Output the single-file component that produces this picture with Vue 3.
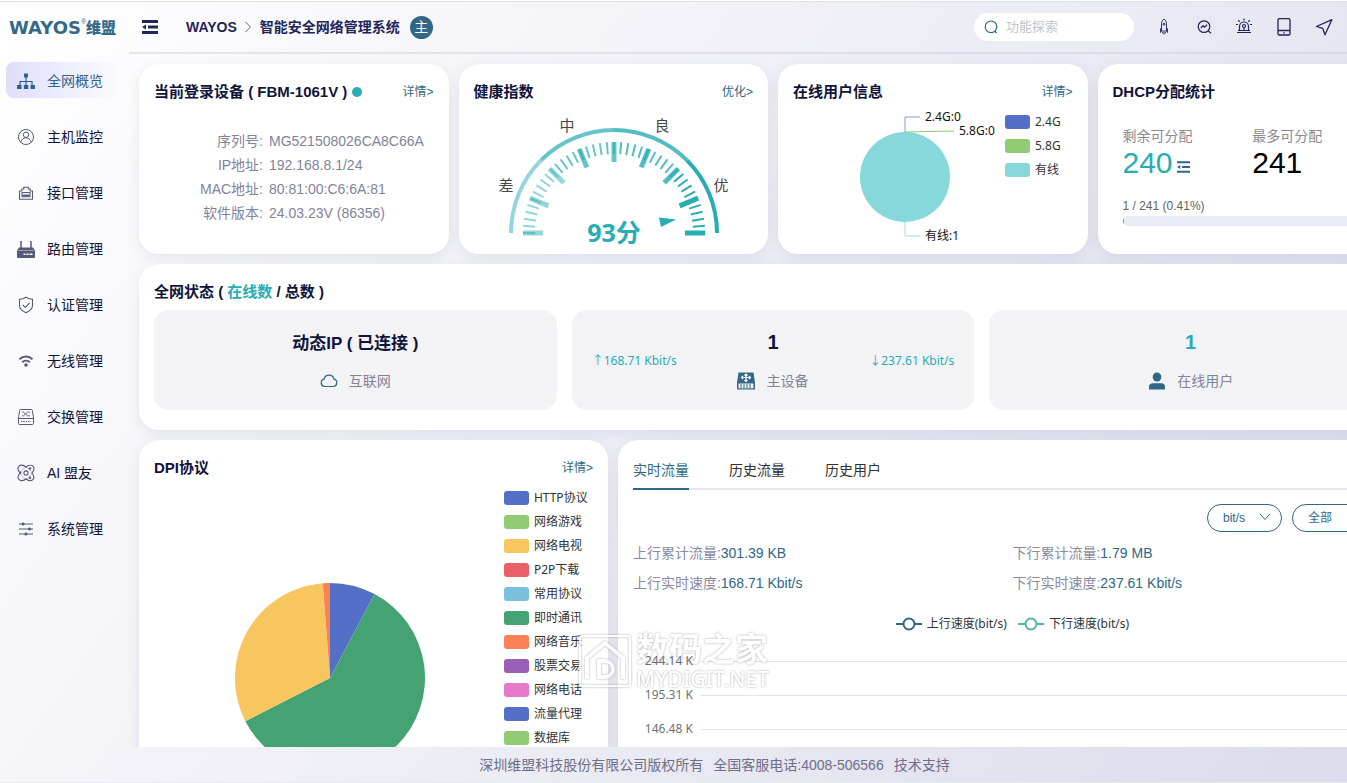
<script setup>
import { ref } from 'vue'

const menu = [
  { icon: 'tree', label: '全网概览' },
  { icon: 'host', label: '主机监控' },
  { icon: 'port', label: '接口管理' },
  { icon: 'router', label: '路由管理' },
  { icon: 'shield', label: '认证管理' },
  { icon: 'wifi', label: '无线管理' },
  { icon: 'switch', label: '交换管理' },
  { icon: 'ai', label: 'AI 盟友' },
  { icon: 'sliders', label: '系统管理' },
]
const activeMenu = ref('tree')

const device = [
  ['序列号:', 'MG521508026CA8C66A'],
  ['IP地址:', '192.168.8.1/24'],
  ['MAC地址:', '80:81:00:C6:6A:81'],
  ['软件版本:', '24.03.23V (86356)'],
]

const polar = (cx, cy, r, deg) => {
  const a = (deg * Math.PI) / 180
  return [cx + r * Math.cos(a), cy + r * Math.sin(a)]
}

const GX = 126
const GY = 129
const bandOpacity = [0.5, 0.7, 0.8, 1]
const bands = bandOpacity.map((opacity, i) => {
  const [x1, y1] = polar(GX, GY, 103, 180 + i * 45)
  const [x2, y2] = polar(GX, GY, 103, 225 + i * 45)
  return { d: `M${x1} ${y1}A103 103 0 0 1 ${x2} ${y2}`, opacity }
})
const tick = (i, len) => {
  const deg = 180 + i * 4.5
  const [x1, y1] = polar(GX, GY, 91, deg)
  const [x2, y2] = polar(GX, GY, 91 - len, deg)
  const band = Math.max(0, Math.ceil(i / 10) - 1)
  return { x1, y1, x2, y2, opacity: bandOpacity[band] }
}
const minorTicks = Array.from({ length: 41 }, (_, i) => tick(i, 12))
const majorTicks = Array.from({ length: 9 }, (_, i) => tick(i * 5, 20))

const userLegend = [
  { label: '2.4G', color: '#5470c6' },
  { label: '5.8G', color: '#91cc75' },
  { label: '有线', color: '#86d8da' },
]

const slice = (from, to, color) => {
  const [x1, y1] = polar(176, 198, 95, from - 90)
  const [x2, y2] = polar(176, 198, 95, to - 90)
  const large = to - from > 180 ? 1 : 0
  return { color, d: `M176 198L${x1} ${y1}A95 95 0 ${large} 1 ${x2} ${y2}Z` }
}
const dpiSlices = [
  slice(0, 28, '#5470c6'),
  slice(28, 243, '#45a373'),
  slice(243, 355.6, '#f8c65f'),
  slice(355.6, 360, '#fa8155'),
]
const dpiLegend = [
  { label: 'HTTP协议', color: '#5470c6' },
  { label: '网络游戏', color: '#91cc75' },
  { label: '网络电视', color: '#f8c65f' },
  { label: 'P2P下载', color: '#ea6068' },
  { label: '常用协议', color: '#78c0de' },
  { label: '即时通讯', color: '#45a373' },
  { label: '网络音乐', color: '#fa8155' },
  { label: '股票交易', color: '#985fb5' },
  { label: '网络电话', color: '#e779cb' },
  { label: '流量代理', color: '#5470c6' },
  { label: '数据库', color: '#91cc75' },
]

const tabs = ['实时流量', '历史流量', '历史用户']
const activeTab = ref(0)
const stats = [
  ['上行累计流量:', '301.39 KB'],
  ['下行累计流量:', '1.79 MB'],
  ['上行实时速度:', '168.71 Kbit/s'],
  ['下行实时速度:', '237.61 Kbit/s'],
]
const axis = ['244.14 K', '195.31 K', '146.48 K']
</script>

<template>
  <div class="app">
    <aside class="side">
      <div class="logo">
        <span class="logo-en">WAYOS</span><sup>®</sup><span class="logo-cn">维盟</span>
      </div>
      <nav>
        <a v-for="m in menu" :key="m.icon" href="#" class="item" :class="{ on: activeMenu === m.icon }" @click.prevent="activeMenu = m.icon">
          <svg viewBox="0 0 20 20" width="20" height="20" fill="none" stroke="currentColor" stroke-width="1.2">
            <g v-if="m.icon === 'tree'">
              <path d="M10 6v9M4 15v-4.5h12V15" />
              <path d="M8 2.500h4v4H8zM1 14h4.500v4H1zM7.800 14h4.500v4H7.800zM14.500 14H19v4h-4.500z" fill="currentColor" stroke="none" />
            </g>
            <g v-else-if="m.icon === 'host'" stroke-width="1">
              <circle cx="10" cy="10" r="7.500" /><circle cx="10" cy="7.800" r="2.700" />
              <path d="M4.800 15.300c.8-3 2.700-4.500 5.200-4.500s4.400 1.500 5.200 4.500" />
            </g>
            <g v-else-if="m.icon === 'port'" stroke-width="1.100">
              <path d="M3.500 16.300V8h2.300V6h2V4.200h4.400V6h2v2h2.300v8.300z" /><path d="M6 9.500h8v4.300H6z" />
              <path d="M6.500 12.500h7" stroke-width="2" />
            </g>
            <g v-else-if="m.icon === 'router'">
              <path d="M5 2v7M15 2v7" stroke-width="1.500" />
              <path d="M3 8.500h14l2 3V18a1 1 0 0 1-1 1H2a1 1 0 0 1-1-1v-6.500z" fill="currentColor" stroke="none" />
              <path d="M2 11.500h16" stroke="#b9b9c8" stroke-width=".7" />
              <path d="M7.500 15.200h2M10.500 15.200h2M13.500 15.200h3" stroke="#fff" stroke-width="1.600" />
            </g>
            <g v-else-if="m.icon === 'shield'" stroke-width="1.100">
              <path d="M10 2.200c2 1.400 4.300 2 6.500 2v6.300c0 3.500-3 5.700-6.500 7.200-3.500-1.500-6.500-3.700-6.500-7.200V4.200c2.200 0 4.500-.6 6.500-2z" />
              <path d="M6.700 9.800l2.600 2.600 4.300-4.600" />
            </g>
            <g v-else-if="m.icon === 'wifi'" stroke-width="2">
              <path d="M3.500 8.200c3.700-3.600 9.300-3.600 13 0" /><path d="M6.200 11.200c2.200-2.100 5.400-2.100 7.600 0" />
              <circle cx="10" cy="14" r="1.800" fill="currentColor" stroke="none" />
            </g>
            <g v-else-if="m.icon === 'switch'" stroke-width="1">
              <path d="M4.800 2.500h10.400c.7 0 1.100.4 1.200 1l1.100 7.500v5.500c0 .6-.4 1-1 1h-13c-.6 0-1-.4-1-1V11l1.100-7.500c.1-.6.500-1 1.200-1zM2.500 11.500h15" />
              <path d="M6 5.200h1.500l4 3.600h2.500M6 8.800h1.500l4-3.600h2.500" stroke-width=".9" />
              <path d="M5 14.500h10" stroke-dasharray="1.400 1" />
            </g>
            <g v-else-if="m.icon === 'ai'" stroke-width="1.100">
              <path d="M10 4C7.500 2 4.500 1.800 3 3.200S2 7.500 4 10c-2 2.500-2.300 5.300-1 6.700s4.500 1.300 7-.7c2.500 2 5.700 2.100 7 .7s1-4.200-1-6.700c2-2.500 2.400-5.400 1-6.800S12.500 2 10 4z" />
              <path d="M4 10c1-2 3.500-5 6-6M10 4c2.500 1 5 4 6 6M16 10c-1 2-3.500 5-6 6M4 10c1 2.500 3.500 5 6 6" stroke-width=".4" />
              <circle cx="10" cy="10" r="2.100" />
              <circle cx="4.300" cy="9.800" r="1.200" fill="currentColor" stroke="none" /><circle cx="14" cy="5.500" r="1.200" fill="currentColor" stroke="none" /><circle cx="14" cy="14.800" r="1.200" fill="currentColor" stroke="none" />
            </g>
            <g v-else>
              <path d="M3 5h14M3 10h14M3 15h14" />
              <path d="M6 4h2v2H6zM12.500 9h2v2h-2zM9 14h2v2H9z" fill="currentColor" stroke-width=".8" />
            </g>
          </svg>
          <span>{{ m.label }}</span>
        </a>
      </nav>
    </aside>

    <header class="top">
      <button class="icon-btn fold" aria-label="折叠菜单">
        <svg viewBox="0 0 16 14" width="16" height="14"><path d="M0 0h16v3H0zM6 5.500h10v3H6zM0 11h16v3H0zM0 7l4-2.500v5z" fill="currentColor" /></svg>
      </button>
      <strong class="brand">WAYOS</strong>
      <svg class="sep" viewBox="0 0 8 12" width="8" height="12" fill="none" stroke="#5e6480"><path d="M1.500 1l5 5-5 5" /></svg>
      <strong class="sys">智能安全网络管理系统</strong>
      <span class="role">主</span>

      <label class="search">
        <svg viewBox="0 0 14 14" width="14" height="14" fill="none" stroke="#2f6784" stroke-width="1.200"><circle cx="7" cy="6.800" r="5.800" /><path d="M10.500 11l2 2" /></svg>
        <input type="text" placeholder="功能探索" aria-label="功能探索" />
      </label>
      <div class="tools">
        <button class="icon-btn" aria-label="加速">
          <svg viewBox="0 0 20 20" width="20" height="20" fill="none" stroke="currentColor"><path d="M7.500 14V6.500C7.500 4.500 8.700 3 10 2c1.300 1 2.500 2.500 2.500 4.500V14zM7.500 10.500L6.500 12v3.500L7.500 14M12.500 10.500l1 1.500v3.500L12.500 14M8.700 15v1.500M11.300 15v1.500M10 15v2.500" stroke-width=".9" /><circle cx="10" cy="7.200" r="1" /></svg>
        </button>
        <button class="icon-btn" aria-label="诊断">
          <svg viewBox="0 0 20 20" width="20" height="20" fill="none" stroke="currentColor" stroke-width="1.200"><circle cx="10" cy="9.600" r="5.800" /><path d="M14.200 13.800l2.800 2.500M6.800 11l2.200-2.300 1.600 1.500 2.500-2.400" /></svg>
        </button>
        <button class="icon-btn" aria-label="告警">
          <svg viewBox="0 0 20 20" width="20" height="20" fill="none" stroke="currentColor" stroke-width="1.200"><path d="M3 15.500h14M5.500 13.500V9.500a4.500 4.500 0 0 1 9 0v4M4 13.500h12M10 1.500v2M4.300 3.200l1.400 1.600M15.700 3.200l-1.400 1.600M2 7.500h2M16 7.500h2M10 10.500v3" /><circle cx="10" cy="9" r="1.500" /></svg>
        </button>
        <button class="icon-btn" aria-label="移动端">
          <svg viewBox="0 0 20 20" width="20" height="20" fill="none" stroke="currentColor" stroke-width="1.300"><rect x="4" y="1.700" width="12" height="16.300" rx="1.200" /><path d="M4 13.500h12M9.300 15.800h1.400" /></svg>
        </button>
        <button class="icon-btn" aria-label="发送">
          <svg viewBox="0 0 20 20" width="20" height="20" fill="none" stroke="currentColor" stroke-width="1.300" stroke-linejoin="round"><path d="M17.800 2.700L2.500 9.500l6.200 1.800 2.300 6.500z" /></svg>
        </button>
      </div>
    </header>

    <main class="main">
      <section class="row four">
        <article class="card">
          <div class="head">
            <h2>当前登录设备 ( FBM-1061V ) <i class="dot"></i></h2>
            <a href="#">详情&gt;</a>
          </div>
          <dl class="device">
            <template v-for="d in device" :key="d[0]">
              <dt>{{ d[0] }}</dt>
              <dd>{{ d[1] }}</dd>
            </template>
          </dl>
        </article>

        <article class="card">
          <div class="head"><h2>健康指数</h2><a href="#">优化&gt;</a></div>
          <svg class="gauge" viewBox="0 0 250 150" width="250" height="150">
            <g fill="none" stroke="#27adb4">
              <path v-for="b in bands" :key="b.d" :d="b.d" :stroke-opacity="b.opacity" stroke-width="4" />
              <line v-for="(t, i) in majorTicks" :key="'a' + i" :x1="t.x1" :y1="t.y1" :x2="t.x2" :y2="t.y2" :stroke-opacity="t.opacity" stroke-width="5" />
              <line v-for="(t, i) in minorTicks" :key="'b' + i" :x1="t.x1" :y1="t.y1" :x2="t.x2" :y2="t.y2" :stroke-opacity="t.opacity" stroke-width="2" />
            </g>
            <path d="M171 113.500l17 2-15 7.500z" fill="#27adb4" />
            <g class="gauge-labels">
              <text x="18" y="87">差</text><text x="79" y="27">中</text><text x="174" y="27">良</text><text x="233" y="87">优</text>
            </g>
            <text class="score" x="126" y="138">93分</text>
          </svg>
        </article>

        <article class="card">
          <div class="head"><h2>在线用户信息</h2><a href="#">详情&gt;</a></div>
          <div class="chart">
            <svg class="pie" viewBox="0 0 212 150" width="212" height="150">
              <circle cx="112" cy="73" r="45" fill="#86d8da" />
              <path d="M112 28V13h15" fill="none" stroke="#5470c6" stroke-opacity=".7" />
              <path d="M112 28l49-1" fill="none" stroke="#91cc75" />
              <path d="M112 118v14h15" fill="none" stroke="#86d8da" stroke-opacity=".8" />
              <text x="132" y="17">2.4G:0</text><text x="166" y="31">5.8G:0</text><text x="132" y="136">有线:1</text>
            </svg>
            <ul class="legend">
              <li v-for="l in userLegend" :key="l.label"><i :style="{ background: l.color }"></i>{{ l.label }}</li>
            </ul>
          </div>
        </article>

        <article class="card">
          <div class="head"><h2>DHCP分配统计</h2></div>
          <div class="dhcp">
            <div class="pair">
              <div>
                <span>剩余可分配</span>
                <b class="teal">240<svg viewBox="0 0 16 14" width="13" height="12"><path d="M0 0h16v2.500H0zM6 5.700h10v2.500H6zM0 11.500h16V14H0zM0 7l4-2.500v5z" fill="#2f6784" /></svg></b>
              </div>
              <div><span>最多可分配</span><b>241</b></div>
            </div>
            <label for="pool">1 / 241 (0.41%)</label>
            <div id="pool" class="bar" role="progressbar" aria-valuenow="0.41"><i :style="{ width: '0.41%' }"></i></div>
          </div>
        </article>
      </section>

      <section class="card status">
        <div class="head"><h2>全网状态 ( <span class="teal">在线数</span> / 总数 )</h2></div>
        <div class="tiles">
          <div class="tile">
            <span class="rate"></span>
            <div class="mid">
              <b class="net">动态IP ( 已连接 )</b>
              <p>
                <svg viewBox="0 0 18 18" width="18" height="18" fill="none" stroke="#2f6784" stroke-width="1.200"><path d="M4.700 14.500a3.700 3.700 0 0 1-.6-7.300 5 5 0 0 1 9.800 0 3.700 3.700 0 0 1-.6 7.300z" /></svg>
                互联网
              </p>
            </div>
            <span class="rate"></span>
          </div>
          <div class="tile">
            <span class="rate">↑168.71 Kbit/s</span>
            <div class="mid">
              <b>1</b>
              <p>
                <svg viewBox="0 0 18 18" width="18" height="18"><path d="M1.500.5h15L18 11v6.500H0V11z" fill="#2f6784" /><path d="M9 2v7.500M4.500 5.500h9M7.500 3.500L9 2l1.500 1.500M7.500 8L9 9.500 10.500 8M6 4L4.500 5.500 6 7M12 4l1.500 1.500L12 7" fill="none" stroke="#fff" stroke-width="1.200" /><path d="M1.500 11.500h15v4.800h-15z" fill="#f3f3f5" /><path d="M3 13h12M3 15h12" stroke="#2f6784" stroke-dasharray="2 1" /></svg>
                主设备
              </p>
            </div>
            <span class="rate">↓237.61 Kbit/s</span>
          </div>
          <div class="tile">
            <span class="rate"></span>
            <div class="mid">
              <b class="teal">1</b>
              <p>
                <svg viewBox="0 0 18 18" width="18" height="18" fill="#2f6784"><ellipse cx="9" cy="5" rx="4.300" ry="4.600" /><path d="M1 17.500V14.500c0-2 1.500-3.300 3.500-3.300h9c2 0 3.500 1.300 3.500 3.300v3z" /></svg>
                在线用户
              </p>
            </div>
            <span class="rate"></span>
          </div>
        </div>
      </section>

      <section class="row two">
        <article class="card">
          <div class="head"><h2>DPI协议</h2><a href="#">详情&gt;</a></div>
          <div class="chart">
            <svg viewBox="0 0 340 310" width="340" height="310"><path v-for="s in dpiSlices" :key="s.color" :d="s.d" :fill="s.color" /></svg>
            <ul class="legend dpi">
              <li v-for="l in dpiLegend" :key="l.label"><i :style="{ background: l.color }"></i>{{ l.label }}</li>
            </ul>
          </div>
        </article>

        <article class="card traffic">
          <div class="tabs" role="tablist">
            <button v-for="(t, i) in tabs" :key="t" role="tab" :class="{ on: i === activeTab }" @click="activeTab = i">{{ t }}</button>
          </div>
          <div class="filters">
            <label class="pick">
              <select aria-label="单位"><option>bit/s</option></select>
              <svg viewBox="0 0 12 8" width="12" height="8" fill="none" stroke="#2f6784"><path d="M1 1l5 5.500L11 1" /></svg>
            </label>
            <label class="pick wide">
              <select aria-label="线路"><option>全部</option></select>
              <svg viewBox="0 0 12 8" width="12" height="8" fill="none" stroke="#2f6784"><path d="M1 1l5 5.500L11 1" /></svg>
            </label>
          </div>
          <div class="stats">
            <div v-for="s in stats" :key="s[0]">{{ s[0] }}<span>{{ s[1] }}</span></div>
          </div>
          <div class="series">
            <span><svg viewBox="0 0 26 14" width="26" height="14" stroke="#2f6784" stroke-width="2" fill="#fff"><path d="M0 7h26" /><circle cx="13" cy="7" r="5.500" /></svg>上行速度(bit/s)</span>
            <span><svg viewBox="0 0 26 14" width="26" height="14" stroke="#56b0b6" stroke-width="2" fill="#fff"><path d="M0 7h26" /><circle cx="13" cy="7" r="5.500" /></svg>下行速度(bit/s)</span>
          </div>
          <div class="axis">
            <div v-for="a in axis" :key="a"><span>{{ a }}</span><i></i></div>
          </div>
        </article>
      </section>
    </main>

    <footer class="foot">
      <span>深圳维盟科技股份有限公司版权所有</span><span>全国客服电话:4008-506566</span><a href="#">技术支持</a>
    </footer>

    <div class="mark">
      <svg viewBox="0 0 56 56" width="56" height="56" fill="none" stroke="#fff">
        <rect x="3" y="3" width="50" height="50" rx="3" stroke-width="2" />
        <path d="M10 46V25L28 10l18 15v21" stroke-width="4" />
        <path d="M22 28h6a8 8 0 0 1 0 16h-6z" stroke-width="4" />
      </svg>
      <div><b>数码之家</b><span>MYDIGIT.NET</span></div>
    </div>
  </div>
</template>

<style>
html, body { margin: 0; overflow: hidden; background: #fff; }
</style>

<style scoped>
* { box-sizing: border-box; }
.app {
  position: relative;
  display: grid;
  grid-template: 52px minmax(0, 1fr) 35px / 129px minmax(0, 1fr);
  min-width: 1429px;
  height: calc(100vh - 1px);
  margin-top: 1px;
  border-top: 1px solid #dfe1e4;
  border-bottom: 1px solid #e9eaef;
  background: linear-gradient(125deg, #fff 0%, #dadbea 100%);
  font: 14px/24px "Liberation Sans", "Noto Sans CJK SC", sans-serif;
  color: #11143a;
  overflow: hidden;
}
a { color: inherit; text-decoration: none; }
button { padding: 0; border: 0; background: none; font: inherit; color: inherit; cursor: pointer; }
h2, p, dl, dd, ul { margin: 0; padding: 0; }
svg { display: block; flex: none; }
.teal { color: #27adb4; }

.side { grid-row: 1 / 3; }
.logo { display: flex; align-items: center; height: 52px; padding-left: 9px; color: #34698a; white-space: nowrap; }
.logo-en { font: bold 18px/24px "DejaVu Sans", sans-serif; }
.logo sup { align-self: flex-start; padding-top: 8px; font-size: 7px; }
.logo-cn { font-size: 15px; font-weight: 900; }
nav { display: flex; flex-direction: column; gap: 20px; padding: 8px 6px; }
.item { display: flex; align-items: center; gap: 11px; height: 36px; padding: 2px 0 0 10px; border-radius: 8px; }
.item svg { color: #565a78; }
.item.on { color: #2f6290; background: linear-gradient(90deg, #dfdefb, rgba(240, 240, 253, 0)); }
.item.on svg { color: #2f6290; }

.top { display: flex; align-items: center; border-bottom: 2px solid rgba(200, 202, 214, .45); color: #1f2658; }
.icon-btn { display: grid; place-items: center; }
.fold { margin: 0 28px 0 13px; }
.brand { font-size: 14px; }
.sep { margin: 0 8px 0 7px; }
.sys { font-weight: 600; font-size: 14px; color: #1f2658; }
.role { width: 23px; height: 23px; margin-left: 10px; border-radius: 50%; background: #2f6784; color: #fff; text-align: center; line-height: 23px; }
.search { display: flex; align-items: center; gap: 8px; width: 160px; height: 28px; margin-left: auto; padding: 0 10px; border-radius: 14px; background: #fff; }
.search input { min-width: 0; width: 100%; padding: 0; border: 0; outline: 0; background: none; font: inherit; font-size: 13px; }
.search input::placeholder { color: #bfc4cd; opacity: 1; }
.tools { display: flex; gap: 20px; margin: 0 95px 0 20px; }

.main { display: flex; flex-direction: column; gap: 10px; padding: 10px 22px 0 10px; overflow: hidden; }
.row { display: grid; gap: 10px; flex: none; }
.four { grid-template-columns: repeat(4, minmax(0, 1fr)); }
.two { grid-template-columns: 41fr 69fr; }
.card { min-width: 0; padding: 16px 15px 0; border-radius: 20px; background: #fff; box-shadow: 0 4px 14px rgba(130, 130, 175, .16); }
.four .card { min-height: 190px; }
.head { display: flex; justify-content: space-between; height: 24px; }
.head h2 { font-size: 15px; line-height: 24px; font-weight: 600; white-space: nowrap; }
.head a { font-size: 12px; color: #2f6784; }
.dot { display: inline-block; width: 10px; height: 10px; border-radius: 50%; background: #2aaeb6; }
.device { display: grid; grid-template-columns: 109px 1fr; column-gap: 6px; padding-top: 25px; color: #82839a; }
.device dt { text-align: right; }
.gauge { margin: 0 auto; }
.gauge-labels text, .score { text-anchor: middle; font: 15px "Noto Sans", "Noto Sans CJK SC", sans-serif; fill: #464646; }
.score { font-size: 25px; font-weight: bold; fill: #27adb4; }
.chart { display: flex; justify-content: space-between; }
.pie { font: 12px "Noto Sans", "Noto Sans CJK SC", sans-serif; fill: #111; }
.legend { flex: 1; padding-top: 6px; list-style: none; font: 12px/24px "Noto Sans", "Noto Sans CJK SC", sans-serif; color: #333; white-space: nowrap; }
.legend.dpi { flex: none; width: 89px; }
.legend li { display: flex; align-items: center; gap: 5px; }
.legend i { width: 25px; height: 14px; border-radius: 3px; }
.dhcp { padding: 20px 10px 0; }
.pair { display: grid; grid-template-columns: 1fr 1fr; }
.pair span { display: block; color: #8b8b8f; }
.pair b { display: flex; align-items: center; gap: 4px; height: 30px; font-size: 30px; font-weight: 400; color: #000; }
.pair b.teal { color: #27adb4; }
.pair svg { margin-top: 8px; }
.dhcp label { display: block; margin-top: 18px; font-size: 12px; line-height: 20px; color: #606266; }
.bar { height: 10px; border-radius: 5px; background: #e9ecf5; overflow: hidden; }
.bar i { display: block; height: 100%; background: #27adb4; }

.status { flex: none; padding-bottom: 20px; }
.tiles { display: grid; grid-template-columns: repeat(3, minmax(0, 1fr)); gap: 15px; margin-top: 6px; }
.tile { display: grid; grid-template-columns: 1fr auto 1fr; align-items: center; height: 100px; padding: 2px 20px 0; border-radius: 15px; background: #f3f3f5; }
.rate { font: 12px/24px "Noto Sans", "Noto Sans CJK SC", sans-serif; color: #27adb4; }
.rate:last-child { text-align: right; }
.mid { text-align: center; }
.mid b { display: block; margin-bottom: 15px; font-size: 20px; }
.mid .net { margin-bottom: 11px; font-size: 17px; line-height: 28px; }
.mid p { display: flex; align-items: center; justify-content: center; gap: 11px; color: #82839a; }

.two .card { min-height: 420px; }
.two .traffic { padding-top: 10px; }
.tabs { display: flex; gap: 40px; height: 40px; box-shadow: inset 0 -2px #e4e8ec; color: #303133; }
.tabs .on { color: #2f6784; box-shadow: inset 0 -2px #2f6784; }
.filters { display: flex; justify-content: flex-end; gap: 10px; margin-top: 14px; }
.pick { position: relative; width: 75px; height: 28px; }
.pick.wide { width: 100px; }
.pick select { width: 100%; height: 100%; padding: 0 15px; border: 1px solid #2f6784; border-radius: 14px; background: #fff; font: inherit; font-size: 12px; color: #2f6784; appearance: none; }
.pick svg { position: absolute; top: 9px; right: 11px; pointer-events: none; }
.stats { display: grid; grid-template-columns: 1fr 1fr; margin-top: 6px; line-height: 30px; color: #8a8ba0; }
.stats span { color: #2f6784; }
.series { display: flex; justify-content: center; gap: 11px; margin-top: 14px; font: 12px/24px "Noto Sans", "Noto Sans CJK SC", sans-serif; color: #333; }
.series span { display: flex; align-items: center; gap: 5px; }
.axis { margin-top: 8px; font: 12px/34px "Noto Sans", "Noto Sans CJK SC", sans-serif; color: #6e7079; }
.axis div { display: flex; align-items: center; gap: 8px; height: 34px; }
.axis span { position: relative; z-index: 2; width: 60px; text-align: right; }
.axis i { flex: 1; height: 1px; background: #e0e3ee; }

.foot { grid-column: 1 / 3; display: flex; align-items: center; justify-content: center; gap: 10px; color: #6d6e88; }

.mark { position: absolute; z-index: 1; left: 577px; top: 630px; display: flex; align-items: center; gap: 3px; color: #fff; opacity: .8; filter: drop-shadow(0 0 1px rgba(110, 110, 120, .7)); pointer-events: none; }
.mark b { display: block; font-size: 33px; line-height: 36px; }
.mark span { display: block; font: 500 21px/22px "Noto Sans", sans-serif; }
</style>
